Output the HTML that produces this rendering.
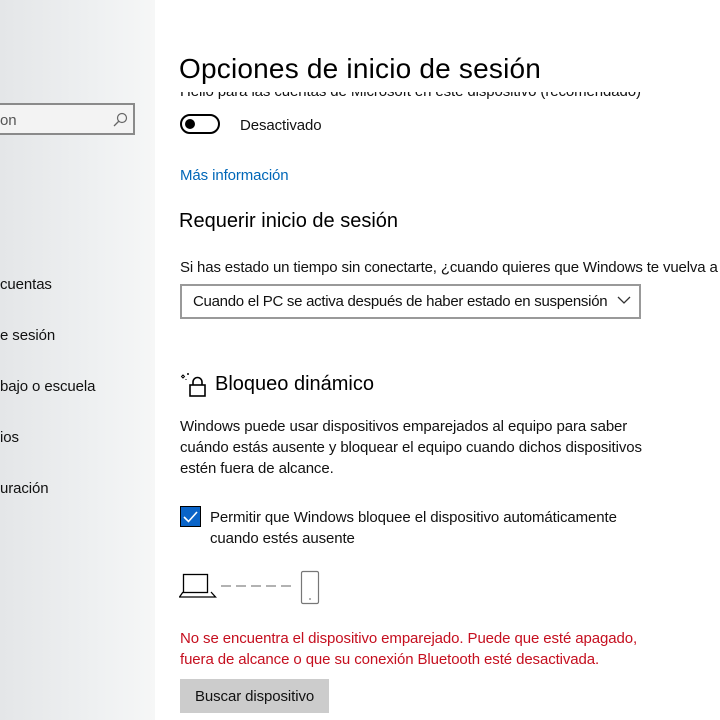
<!DOCTYPE html><html><head><meta charset="utf-8"><style>
body{margin:0;width:720px;height:720px;overflow:hidden;background:#fff;font-family:"Liberation Sans",sans-serif;position:relative;color:#000}
.side{position:absolute;left:0;top:0;width:155px;height:720px;background:linear-gradient(90deg,#e4e6e8 0%,#eef0f1 60%,#f6f7f7 100%)}
.t{position:absolute;white-space:nowrap}
.s{font-size:15px;color:#111;letter-spacing:-0.1px}
</style></head><body>
<div class="side"></div>
<div class="t" style="left:0;top:103px;width:135px;height:32px;box-sizing:border-box;border:2px solid #8a8a8a;border-left:none;background:#f3f3f3"></div>
<div class="t s" style="left:0;top:112px;color:#555">on</div>
<svg class="t" style="left:112px;top:112px" width="16" height="16" viewBox="0 0 16 16"><circle cx="10" cy="6" r="4.5" fill="none" stroke="#666" stroke-width="1.2"/><path d="M7 9L2 14" stroke="#666" stroke-width="1.3"/></svg>
<div class="t s" style="left:0;top:276px">cuentas</div>
<div class="t s" style="left:0;top:327px">e sesión</div>
<div class="t s" style="left:0;top:378px">bajo o escuela</div>
<div class="t s" style="left:0;top:429px">ios</div>
<div class="t s" style="left:0;top:480px">uración</div>
<div class="t" style="left:180px;top:92px;height:10px;overflow:hidden"><div class="s" style="position:relative;top:-9px;font-size:15px">Hello para las cuentas de Microsoft en este dispositivo (recomendado)</div></div>
<div class="t" style="left:179px;top:53px;font-size:28px;letter-spacing:0.2px">Opciones de inicio de sesión</div>
<div class="t" style="left:180px;top:114px;width:40px;height:20px;box-sizing:border-box;border:2px solid #000;border-radius:10px"></div>
<div class="t" style="left:185px;top:119px;width:10px;height:10px;border-radius:50%;background:#000"></div>
<div class="t s" style="left:240px;top:117px">Desactivado</div>
<div class="t s" style="left:180px;top:167px;color:#0067b8">Más información</div>
<div class="t" style="left:179px;top:210px;font-size:20px">Requerir inicio de sesión</div>
<div class="t s" style="left:180px;top:259px;letter-spacing:-0.15px">Si has estado un tiempo sin conectarte, ¿cuando quieres que Windows te vuelva a</div>
<div class="t" style="left:180px;top:284px;width:461px;height:35px;box-sizing:border-box;border:2px solid #999"></div>
<div class="t s" style="left:193px;top:293px;letter-spacing:-0.28px">Cuando el PC se activa después de haber estado en suspensión</div>
<svg class="t" style="left:617px;top:295px" width="14" height="10"><path d="M1 2l6 6 6-6" fill="none" stroke="#333" stroke-width="1.3"/></svg>
<svg class="t" style="left:179px;top:372px" width="30" height="26" viewBox="0 0 30 26"><path d="M4 3l1.5 1.5L4 6 2.5 4.5z M9 1v2 M8 2h2 M7 7v1" stroke="#000" fill="none" stroke-width="1"/><rect x="11" y="13" width="15" height="11" fill="none" stroke="#000" stroke-width="1.6"/><path d="M14 13v-3a4.5 4.5 0 0 1 9 0v3" fill="none" stroke="#000" stroke-width="1.6"/></svg>
<div class="t" style="left:215px;top:373px;font-size:20px">Bloqueo dinámico</div>
<div class="t s" style="left:180px;top:416px;line-height:21px">Windows puede usar dispositivos emparejados al equipo para saber<br>cuándo estás ausente y bloquear el equipo cuando dichos dispositivos<br>estén fuera de alcance.</div>
<div class="t" style="left:180px;top:506px;width:21px;height:21px;background:#0a64c8;border:1px solid #000;box-sizing:border-box"></div>
<svg class="t" style="left:180px;top:506px" width="21" height="21"><path d="M4 11l4.5 4.5L17 6" fill="none" stroke="#fff" stroke-width="1.6"/></svg>
<div class="t s" style="left:210px;top:507px;line-height:21px">Permitir que Windows bloquee el dispositivo automáticamente<br>cuando estés ausente</div>
<svg class="t" style="left:179px;top:570px" width="145" height="36"><rect x="4.5" y="4.5" width="24" height="18" fill="none" stroke="#000" stroke-width="1.3"/><path d="M4 22L0.5 27h36L32 22" fill="none" stroke="#000" stroke-width="1.3"/><path d="M42 16h10M57 16h10M72 16h10M87 16h10M102 16h10" stroke="#999" stroke-width="1.5"/><rect x="122.5" y="1.5" width="17" height="32" rx="1.5" fill="none" stroke="#777" stroke-width="1.2"/><path d="M130 29h2" stroke="#666"/></svg>
<div class="t s" style="left:180px;top:628px;line-height:21px;color:#c50f1f">No se encuentra el dispositivo emparejado. Puede que esté apagado,<br>fuera de alcance o que su conexión Bluetooth esté desactivada.</div>
<div class="t" style="left:180px;top:679px;width:149px;height:34px;background:#ccc"></div>
<div class="t s" style="left:195px;top:688px">Buscar dispositivo</div>
</body></html>
